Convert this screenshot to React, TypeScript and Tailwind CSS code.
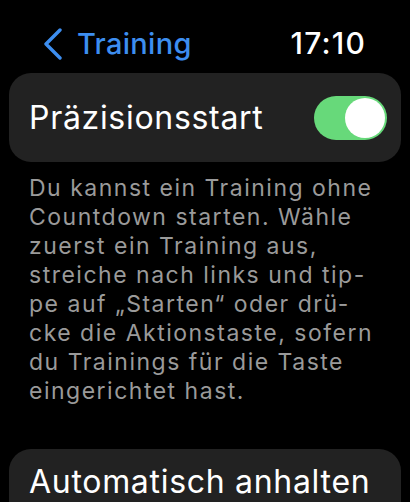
const lines = [
  'Du kannst ein Training ohne',
  'Countdown starten. Wähle',
  'zuerst ein Training aus,',
  'streiche nach links und tip-',
  'pe auf „Starten“ oder drü-',
  'cke die Aktionstaste, sofern',
  'du Trainings für die Taste',
  'eingerichtet hast.',
];

function BackChevron() {
  return (
    <svg width="20" height="32" viewBox="0 0 20 32" fill="none" aria-hidden>
      <path
        d="M17 2 L3 16 L17 30"
        stroke="currentColor"
        strokeWidth="3.4"
        strokeLinecap="round"
        strokeLinejoin="round"
      />
    </svg>
  );
}

function Toggle({ on }: { on: boolean }) {
  return (
    <div
      className={`flex h-[44px] w-[73px] items-center rounded-full p-[2px] ${
        on ? 'justify-end bg-[#67d97a]' : 'justify-start bg-[#3a3a3c]'
      }`}
    >
      <div className="h-[40px] w-[40px] rounded-full bg-white" />
    </div>
  );
}

export default function App() {
  return (
    <div
      className="h-[502px] w-[410px] overflow-hidden bg-black text-white"
      style={{ fontFamily: 'Inter, "Noto Sans", sans-serif' }}
    >
      <header className="flex h-[73px] items-center justify-between pt-[14px] pl-[43px] pr-[44px]">
        <div className="flex items-center text-[#3d8ef0]">
          <BackChevron />
          <span className="ml-[14px] text-[29px] font-medium tracking-[0.3px]">Training</span>
        </div>
        <span className="text-[30px] font-medium tracking-[1.2px]">17:10</span>
      </header>

      <div className="mx-[9px] flex h-[89px] items-center justify-between rounded-[22px] bg-[#222222] pl-[20px] pr-[14px]">
        <span className="text-[32px] tracking-[0.7px]">Präzisionsstart</span>
        <Toggle on />
      </div>

      <p className="px-[29px] pt-[12px] text-[23px] leading-[29px] tracking-[1.5px] text-[#9a9a9a]">
        {lines.map((l) => (
          <span key={l} className="block whitespace-nowrap">
            {l}
          </span>
        ))}
      </p>

      <div className="mx-[9px] mt-[43px] flex h-[89px] items-start rounded-[22px] bg-[#222222] pl-[20px] pt-[17px]">
        <span className="text-[32px] leading-[32px] tracking-[0.7px]">Automatisch anhalten</span>
      </div>
    </div>
  );
}
